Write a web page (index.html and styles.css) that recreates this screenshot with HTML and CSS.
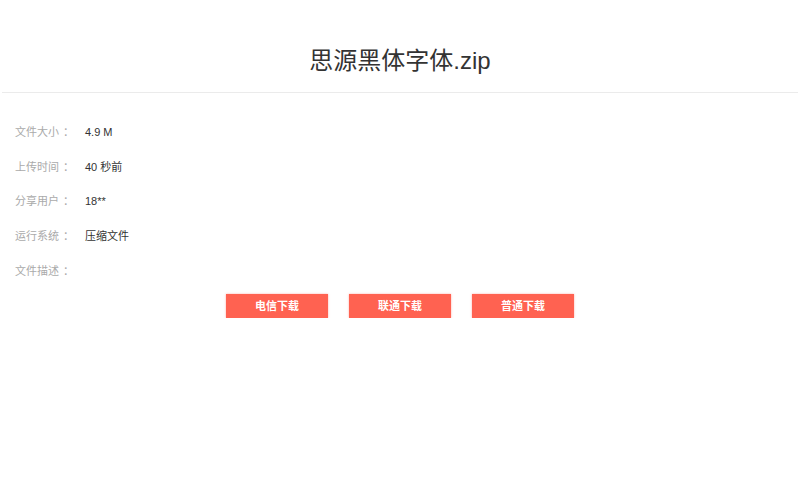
FILE: index.html
```html
<!DOCTYPE html>
<html lang="zh-CN">
<head>
    <meta charset="UTF-8">
    <meta name="viewport" content="width=device-width, initial-scale=1.0">
    <title>思源黑体字体.zip</title>
    <link rel="stylesheet" href="styles.css">
</head>
<body>
    <div class="page">
        <h1 class="file-title">思源黑体字体.zip</h1>

        <ul class="file-info">
            <li><span class="label">文件大小<i>：</i></span><span class="value">4.9 M</span></li>
            <li><span class="label">上传时间<i>：</i></span><span class="value">40 秒前</span></li>
            <li><span class="label">分享用户<i>：</i></span><span class="value">18**</span></li>
            <li><span class="label">运行系统<i>：</i></span><span class="value">压缩文件</span></li>
            <li><span class="label">文件描述<i>：</i></span><span class="value"></span></li>
        </ul>

        <div class="download-btns">
            <a href="#" class="btn">电信下载</a>
            <a href="#" class="btn">联通下载</a>
            <a href="#" class="btn">普通下载</a>
        </div>
    </div>
</body>
</html>
```

FILE: styles.css
```css
body {
  margin: 0;
  background: #fff;
  font-family: "Liberation Sans", "Noto Sans CJK SC", sans-serif;
  color: #333;
}

.page {
  padding: 0 2px;
}

.file-title {
  margin: 0;
  padding-top: 44px;
  height: 48px;
  line-height: 34px;
  text-align: center;
  font-size: 24px;
  font-weight: normal;
  color: #333;
  border-bottom: 1px solid #ebebeb;
}

.file-info {
  list-style: none;
  margin: 0;
  padding: 22px 0 0 13px;
}

.file-info li {
  display: flex;
  height: 34.7px;
  line-height: 34.7px;
  font-size: 11px;
}

.file-info .label {
  width: 70px;
  color: #aaa;
}

.file-info .label i {
  font-style: normal;
  margin-left: 4px;
}

.file-info .value {
  color: #333;
}

.download-btns {
  display: flex;
  justify-content: center;
  gap: 21px;
  margin-top: 6px;
}

.btn {
  display: block;
  width: 102px;
  height: 24px;
  line-height: 24px;
  text-align: center;
  background: #ff6251;
  color: #fff;
  font-size: 11px;
  font-weight: bold;
  text-decoration: none;
  box-shadow: 0 0 2px rgba(255, 98, 81, 0.5);
}
```
